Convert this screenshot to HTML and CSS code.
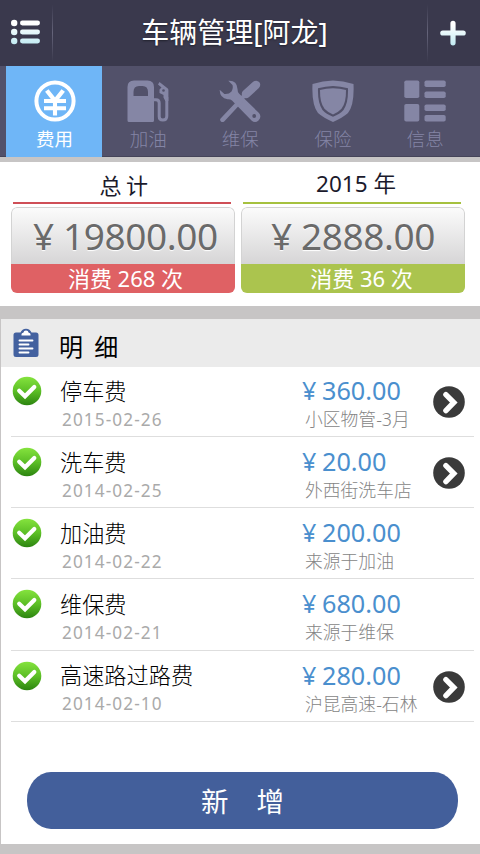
FILE: index.html
```html
<!DOCTYPE html>
<html lang="zh-CN">
<head>
<meta charset="utf-8">
<title>车辆管理</title>
<link rel="stylesheet" href="styles.css">
</head>
<body>
<svg class="defs" width="0" height="0" aria-hidden="true">
  <defs>
    <linearGradient id="ice" gradientUnits="userSpaceOnUse" x1="0" y1="0" x2="0" y2="26"><stop offset=".2" stop-color="#fff"/><stop offset="1" stop-color="#bfeaf2"/></linearGradient>
    <linearGradient id="green" x1="0" y1="0" x2="0" y2="1"><stop offset="0" stop-color="#85e33e"/><stop offset=".5" stop-color="#5cbf26"/><stop offset="1" stop-color="#2c8410"/></linearGradient>
    <symbol id="check" viewBox="0 0 30 30"><circle cx="15" cy="15" r="14.3" fill="url(#green)"/><path d="M7.2 14.8L13 20.3L22.3 11" fill="none" stroke="#fff" stroke-width="4.2" stroke-linecap="round"/></symbol>
    <symbol id="go" viewBox="0 0 32 32"><circle cx="16" cy="16" r="15.8" fill="#3a3a3a"/><path d="M12.9 8.7L20.8 16.5L12.9 24.6" fill="none" stroke="#fff" stroke-width="5.4" stroke-linecap="round" stroke-linejoin="miter"/></symbol>
  </defs>
</svg>
<header class="top">
  <button class="menu"><svg width="30" height="26" viewBox="0 0 30 26" fill="url(#ice)"><circle cx="3.2" cy="4" r="3.2"/><circle cx="3.2" cy="13" r="3.2"/><circle cx="3.2" cy="22" r="3.2"/><rect x="9" y="1.6" width="20" height="4.8" rx="2.4"/><rect x="9" y="10.6" width="20" height="4.8" rx="2.4"/><rect x="9" y="19.6" width="20" height="4.8" rx="2.4"/></svg></button>
  <i class="divider"></i>
  <h1>车辆管理[阿龙]</h1>
  <i class="divider"></i>
  <button class="add"><svg width="26" height="26" viewBox="0 0 26 26"><path d="M2.8 13H23.2M13 3.4V22.8" stroke="url(#ice)" stroke-width="5.2" stroke-linecap="round"/></svg></button>
</header>
<nav class="tabs">
  <a class="tab active"><svg width="42" height="42" viewBox="0 0 42 42" fill="none" stroke="currentColor"><circle cx="21" cy="21" r="18.6" stroke-width="4"/><path d="M12.8 10.5L21 20.8L29.2 10.5" stroke-width="4.4"/><path d="M10 21H32M10 28.2H32M21 20V35.5" stroke-width="4.1"/></svg><span>费用</span></a>
  <a class="tab"><svg width="42" height="42" viewBox="0 0 42 42"><path fill="currentColor" fill-rule="evenodd" d="M7 .5H20.5Q27 .5 27 7V40.5Q27 42 25.5 42H2Q.5 42 .5 40.5V7Q.5 .5 7 .5ZM12 6Q6.5 6 6.5 12V16H21V12Q21 6 15.5 6Z"/><path d="M26 19.8H29Q32.2 19.8 32.2 23V36.5Q32.2 40 35.8 40Q39.8 40 39.8 36V17" fill="none" stroke="currentColor" stroke-width="3"/><path d="M32.5 2L40.8 8.5Q41.4 9 41.4 10V21H38.3L36.5 17.5V15L32.5 13V9.5L34.5 7.5L31 4.5Z" fill="currentColor"/><circle cx="36.5" cy="10.5" r="1.3" fill="#52516a"/></svg><span>加油</span></a>
  <a class="tab"><svg width="42" height="42" viewBox="0 0 42 42"><path fill="currentColor" d="M9.3 .8Q18 .2 18.5 9Q18.5 12 20 13.5L40 33Q43 37 39.5 40.5Q36 43.5 32.5 40.5L13 20.5Q11.5 19 8.5 19.2Q1 18.5.6 9.8L5.4 14Q10 14.4 12.5 11.5Q14.4 8.5 13.5 5Z"/><path d="M3.5 39.8L21.2 21" stroke="currentColor" stroke-width="4.6" stroke-linecap="round"/><path d="M20 21L26.5 14.5" stroke="currentColor" stroke-width="4"/><path d="M27 14L37 4.9" stroke="currentColor" stroke-width="8.5" stroke-linecap="round"/><circle cx="35.2" cy="36" r="1.9" fill="#52516a"/></svg><span>维保</span></a>
  <a class="tab"><svg width="42" height="42" viewBox="0 0 42 42" fill="currentColor"><path fill-rule="evenodd" d="M21 .5Q31 .8 41.5 4Q42.5 25 36 33Q31 37.5 21 42Q11 37.5 6 33Q-.5 25 .5 4Q11 .8 21 .5ZM21 6Q13.5 6.2 6 8.2Q5.5 23 10.5 30Q14 34 21 36.8Q28 34 31.5 30Q36.5 23 36 8.2Q28.5 6.2 21 6Z"/><path d="M21 8.2Q28 8.4 34 10Q34.2 23 29.5 28.8Q26.5 32.2 21 34.4Q15.5 32.2 12.5 28.8Q7.8 23 8 10Q14 8.4 21 8.2Z"/></svg><span>保险</span></a>
  <a class="tab"><svg width="42" height="42" viewBox="0 0 42 42" fill="currentColor"><rect x=".3" y=".5" width="15" height="17.5" rx="1.8"/><rect x=".3" y="24" width="15" height="17.5" rx="1.8"/><rect x="20.5" y=".5" width="21.2" height="6.6" rx="1.8"/><rect x="20.5" y="11.5" width="21.2" height="6.6" rx="1.8"/><rect x="20.5" y="24.5" width="21.2" height="6.6" rx="1.8"/><rect x="20.5" y="35" width="21.2" height="6.6" rx="1.8"/></svg><span>信息</span></a>
</nav>
<section class="summary">
  <article class="stat red">
    <h2 class="spaced">总计</h2>
    <div class="card"><div class="total"><span class="yen">¥</span><span>19800.00</span></div><div class="count">消费 268 次</div></div>
  </article>
  <article class="stat lime">
    <h2>2015 年</h2>
    <div class="card"><div class="total"><span class="yen">¥</span><span>2888.00</span></div><div class="count">消费 36 次</div></div>
  </article>
</section>
<main class="detail">
  <div class="heading"><svg width="26" height="30" viewBox="0 0 26 30"><path d="M3 4.5H7.5Q9 .7 13 .7Q17 .7 18.5 4.5H23Q25.5 4.5 25.5 7V26.5Q25.5 29 23 29H3Q.5 29 .5 26.5V7Q.5 4.5 3 4.5Z" fill="#43619f"/><path d="M8.5 7.6V6.3Q8.5 5 10.3 4.8Q10.8 2.6 13 2.6Q15.2 2.6 15.7 4.8Q17.5 5 17.5 6.3V7.6Z" fill="#fff"/><path d="M6.5 12.5H19.5M6.5 16.5H15.5M6.5 20.5H19.5M6.5 24.5H15.5" stroke="#fff" stroke-width="1.9" stroke-linecap="round"/></svg><h2>明 细</h2></div>
  <ul>
    <li><svg class="check"><use href="#check"/></svg><div class="item"><b>停车费</b><time>2015-02-26</time></div><div class="cost"><strong><span>¥</span>360.00</strong><small>小区物管-3月</small></div><svg class="go"><use href="#go"/></svg></li>
    <li><svg class="check"><use href="#check"/></svg><div class="item"><b>洗车费</b><time>2014-02-25</time></div><div class="cost"><strong><span>¥</span>20.00</strong><small>外西街洗车店</small></div><svg class="go"><use href="#go"/></svg></li>
    <li><svg class="check"><use href="#check"/></svg><div class="item"><b>加油费</b><time>2014-02-22</time></div><div class="cost"><strong><span>¥</span>200.00</strong><small>来源于加油</small></div></li>
    <li><svg class="check"><use href="#check"/></svg><div class="item"><b>维保费</b><time>2014-02-21</time></div><div class="cost"><strong><span>¥</span>680.00</strong><small>来源于维保</small></div></li>
    <li><svg class="check"><use href="#check"/></svg><div class="item"><b>高速路过路费</b><time>2014-02-10</time></div><div class="cost"><strong><span>¥</span>280.00</strong><small>沪昆高速-石林</small></div><svg class="go"><use href="#go"/></svg></li>
  </ul>
  <button class="create">新<span>增</span></button>
</main>
</body>
</html>
```
FILE: styles.css
```css
* { box-sizing: border-box; }
body {
  margin: 0;
  width: 480px;
  height: 854px;
  overflow: hidden;
  background: #c7c5c5;
  font-family: "Noto Sans", "Noto Sans CJK SC", sans-serif;
  color: #000;
}
h1, h2, ul { margin: 0; padding: 0; font-weight: 400; }
button { border: 0; padding: 0; background: none; font: inherit; }
svg { display: block; flex: none; }
.defs { position: absolute; }

.top {
  display: flex;
  align-items: center;
  height: 66px;
  background: #3a394d;
  color: #fff;
}
.menu { width: 52px; padding: 0 0 2px 11px; height: 30px; }
.add { width: 52px; padding: 0 0 1px 12px; height: 26px; }
.divider {
  width: 1px;
  height: 58px;
  background: linear-gradient(#3a394d, #65647a 50%, #3a394d);
}
.top h1 {
  flex: 1;
  padding-right: 11px;
  text-align: center;
  font-size: 28px;
  line-height: 64px;
  height: 66px;
  white-space: nowrap;
  text-shadow: 0 1px 2px #20202c;
}

.tabs {
  display: grid;
  grid-template-columns: 96px 91.5px 92.5px 93px 91.5px;
  height: 91px;
  padding-left: 6px;
  background: #52516a;
  border-bottom: 1px solid #454459;
}
.tab {
  display: flex;
  flex-direction: column;
  align-items: center;
  padding: 14px 0 0 1px;
  color: #8586a5;
  height: 91px;
}
.tab span { font-size: 18.5px; line-height: 26px; margin-top: 4px; font-weight: 300; color: #8485a6; }
.tab.active { background: #6fb6f7; color: #fff; }
.tab.active span { color: #fff; font-weight: 400; }

.summary {
  display: flex;
  gap: 6px;
  height: 144px;
  margin-top: 5px;
  padding-left: 11px;
  background: #fff;
}
.stat { width: 224px; }
.stat h2 {
  height: 42px;
  margin: 0 4px 3px 2px;
  padding-left: 8px;
  border-bottom: 2px solid;
  text-align: center;
  font-size: 22.5px;
  line-height: 44px;
  color: #1b1a2c;
}
.stat h2.spaced { letter-spacing: 4.5px; line-height: 47px; font-size: 22px; }
.red h2 { border-color: #cf4f57; }
.lime h2 { border-color: #a6c13f; }
.card { height: 86px; border-radius: 6px; overflow: hidden; }
.total {
  display: flex;
  height: 57px;
  border: 1px solid #d3d3d3;
  border-bottom: 0;
  border-radius: 6px 6px 0 0;
  background: linear-gradient(#fbfbfb, #d6d5d6);
  color: #6a6a6a;
  font-size: 37px;
  line-height: 55px;
  letter-spacing: -.4px;
  text-shadow: 0 1px 1px #fff;
}
.total .yen { width: 30px; margin-left: 21px; }
.lime .yen { margin-left: 29px; }
.count {
  height: 29px;
  padding-left: 5px;
  text-align: center;
  font-size: 22px;
  line-height: 29px;
  color: #fff;
}
.lime .count { padding-left: 17px; }
.red .count { background: #df6164; }
.lime .count { background: #abc44e; }

.detail {
  height: 525px;
  margin: 13px 0 0 1px;
  background: #fff;
}
.heading {
  display: flex;
  align-items: center;
  height: 48px;
  padding-left: 12px;
  background: #ebebeb;
}
.heading h2 { margin: 7px 0 0 20px; font-size: 24px; line-height: 42px; word-spacing: 5px; }
.detail ul { list-style: none; padding: 0 6px 0 10px; }
.detail li {
  display: flex;
  height: 71.2px;
  padding-top: 1px;
  border-bottom: 1.5px solid #dedede;
}
.detail li:first-child { height: 70px; padding-top: 0; }
.check { width: 30px; height: 30px; margin: 9px 0 0 1px; }
.item { width: 242px; padding: 9.5px 0 0 18px; }
.item b, .item time, .cost strong, .cost small { display: block; white-space: nowrap; }
.item b { font-size: 22.2px; line-height: 30px; font-weight: 300; }
.item time { margin-left: 2px; font-size: 17.2px; line-height: 25px; letter-spacing: 1.1px; color: #aaa; }
.cost { width: 130px; padding-top: 8px; margin-left: 18px; }
.cost strong { display: flex; font-size: 25.2px; line-height: 30px; font-weight: 400; color: #4a8fce; }
.cost strong span { width: 20px; }
.cost small { margin-left: 3px; font-size: 17.8px; line-height: 28px; font-weight: 300; color: #858585; }
.go { width: 32px; height: 32px; margin: 19px 0 0 1px; }
.create {
  display: block;
  width: 431px;
  height: 57px;
  margin: 50px 0 0 26px;
  padding-top: 3px;
  border-radius: 24px / 28px;
  background: #435f9b;
  color: #fff;
  font-size: 27.5px;
  line-height: 54px;
}
.create span { margin-left: 28px; }
```
